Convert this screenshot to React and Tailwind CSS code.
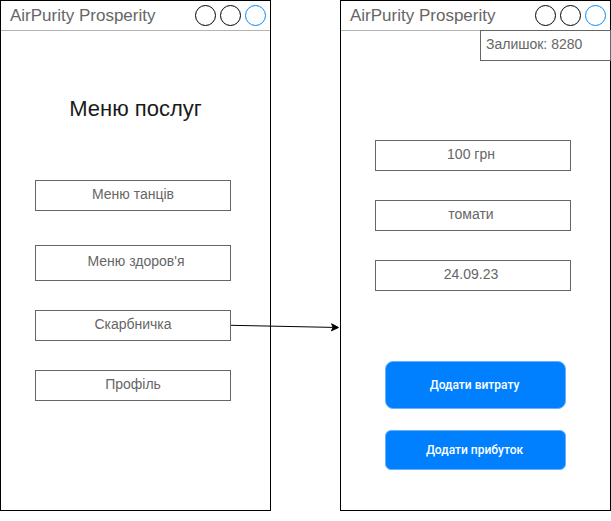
import React from "react";

function Header() {
  return (
    <header className="flex h-[30px] items-center justify-between border-b border-[#b3b3b3] pl-[9px] pr-1">
      <span className="text-[17px] leading-[30px] whitespace-nowrap text-[#666666]">
        AirPurity Prosperity
      </span>
      <div className="flex gap-1">
        <button type="button" aria-label="Minimize" className="size-[21px] rounded-full border border-black" />
        <button type="button" aria-label="Maximize" className="size-[21px] rounded-full border border-black" />
        <button type="button" aria-label="Close" className="size-[21px] rounded-full border border-[#008cff]" />
      </div>
    </header>
  );
}

function Screen({ children }) {
  return (
    <section className="border border-black bg-white">
      <Header />
      {children}
    </section>
  );
}

function MenuButton({ children, tall }) {
  return (
    <button
      type="button"
      className={`${tall ? "h-9 pb-1 pl-1.5" : "h-[31px] pb-[3px]"} block w-full border border-[#666666] text-center text-sm text-[#666666]`}
    >
      {children}
    </button>
  );
}

function Arrow() {
  return (
    <svg
      className="absolute left-full top-[10px]"
      width="108"
      height="12"
      viewBox="0 0 108 12"
      fill="none"
      aria-hidden="true"
    >
      <path d="M0 5.3L102 7.4" stroke="black" />
      <path d="M107.5 7.5L100.4 10.8L102.2 7.4L100.6 3.8Z" fill="black" stroke="black" />
    </svg>
  );
}

function Field({ label, value }) {
  return (
    <input
      type="text"
      aria-label={label}
      defaultValue={value}
      className="block h-[31px] w-full border border-[#666666] pb-[3px] pl-1 pr-2 text-center text-sm text-[#666666]"
    />
  );
}

export default function App() {
  return (
    <main className="grid grid-cols-2 gap-[69px] bg-white font-['Liberation_Sans',Arial,sans-serif]">
      <Screen>
        <h1 className="mt-16 text-center text-[22px] leading-7 text-[#1a1a1a]">Меню послуг</h1>
        <nav className="mt-[57px] pb-[109px] pl-[34px] pr-[39px]">
          <ul>
            <li>
              <MenuButton>Меню танців</MenuButton>
            </li>
            <li className="mt-[34px]">
              <MenuButton tall>Меню здоров'я</MenuButton>
            </li>
            <li className="relative mt-[29px]">
              <MenuButton>Скарбничка</MenuButton>
              <Arrow />
            </li>
            <li className="mt-[29px]">
              <MenuButton>Профіль</MenuButton>
            </li>
          </ul>
        </nav>
      </Screen>
      <Screen>
        <p className="-mr-px -mt-px ml-auto h-[31px] w-[131px] border border-[#666666] pl-[5px] text-sm leading-[27px] whitespace-nowrap text-[#666666]">
          Залишок: 8280
        </p>
        <form className="mt-[79px] pb-[39px] pl-[34px] pr-[39px]">
          <div className="flex flex-col gap-[29px]">
            <Field label="Сума" value="100 грн" />
            <Field label="Назва" value="томати" />
            <Field label="Дата" value="24.09.23" />
          </div>
          <div className="mt-[70px] flex flex-col gap-[21px] pl-[10px] pr-[5px] font-['Roboto',sans-serif] text-xs font-medium text-white">
            <button type="button" className="h-12 rounded-lg border border-[#66b2ff] bg-[#0080ff] pr-[2px]">
              Додати витрату
            </button>
            <button type="button" className="h-10 rounded-md border border-[#66b2ff] bg-[#0080ff] pr-[2px]">
              Додати прибуток
            </button>
          </div>
        </form>
      </Screen>
    </main>
  );
}
